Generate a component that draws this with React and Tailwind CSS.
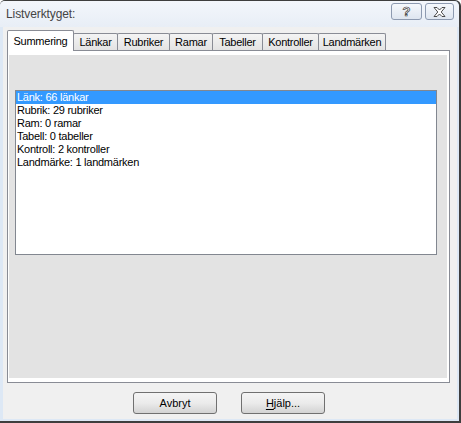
const tabs = [
  { label: "Summering", w: "w-[67px]", active: true },
  { label: "Länkar", w: "w-[45px]" },
  { label: "Rubriker", w: "w-[53px]" },
  { label: "Ramar", w: "w-[44px]" },
  { label: "Tabeller", w: "w-[51px]" },
  { label: "Kontroller", w: "w-[57px]" },
  { label: "Landmärken", w: "w-[68px]" },
];

const rows = [
  "Länk: 66 länkar",
  "Rubrik: 29 rubriker",
  "Ram: 0 ramar",
  "Tabell: 0 tabeller",
  "Kontroll: 2 kontroller",
  "Landmärke: 1 landmärken",
];

const CaptionButton = ({ w, children }) => (
  <div
    className={`${w} h-[17px] flex items-center justify-center rounded-[3px] border border-[#8d9ab0] bg-gradient-to-b from-[#f5f8fc] to-[#dfe6f0]`}
  >
    {children}
  </div>
);

const DialogButton = ({ children }) => (
  <button className="w-[84px] h-[22px] rounded-[3px] border border-[#707070] bg-gradient-to-b from-[#f4f4f4] via-[#ebebeb] to-[#d3d3d3] text-[11px] text-black flex items-center justify-center">
    {children}
  </button>
);

export default function App() {
  return (
    <div
      className="w-[461px] h-[423px] overflow-hidden bg-white"
      style={{ fontFamily: '"Liberation Sans", Arial, sans-serif' }}
    >
      <div className="w-full h-full flex flex-col border-t border-r-2 border-b-2 border-[#3e3e3e] rounded-tl-[5px] rounded-tr-[6px] bg-[#dde8f5]">
        {/* Title bar */}
        <div className="h-[26px] flex items-center pl-[6px] pr-[5px] bg-gradient-to-b from-[#f3f6fb] to-[#e8eef6] rounded-tl-[5px] rounded-tr-[6px]">
          <span className="text-[12px] text-[#444444] tracking-[-0.1px]">Listverktyget:</span>
          <div className="ml-auto flex items-center gap-[3px] -mt-[5px]">
            <CaptionButton w="w-[31px]">
              <span className="text-[13px] font-bold leading-none text-white [-webkit-text-stroke:0.7px_#3a3a3a]">?</span>
            </CaptionButton>
            <CaptionButton w="w-[29px]">
              <svg width="13" height="10" viewBox="0 0 13 10">
                <polygon
                  points="1,0.5 4,0.5 6.5,3 9,0.5 12,0.5 8.2,5 12,9.5 9,9.5 6.5,7 4,9.5 1,9.5 4.8,5"
                  fill="#ffffff"
                  stroke="#3a3a3a"
                  strokeWidth="0.9"
                  strokeLinejoin="round"
                />
              </svg>
            </CaptionButton>
          </div>
        </div>

        {/* Client area */}
        <div className="flex-1 ml-[3px] mr-[2px] mb-[2px] bg-[#f0f0f0] flex flex-col pt-[3px]">
          {/* Tabs */}
          <div className="ml-[4px] h-[20px] flex items-start">
            {tabs.map((t) =>
              t.active ? (
                <div
                  key={t.label}
                  className={`${t.w} h-[21px] relative z-10 bg-white border-t border-l border-r border-[#898c95] rounded-t-[2px] flex items-center justify-center text-[11px] tracking-[-0.25px] text-black`}
                >
                  {t.label}
                </div>
              ) : (
                <div
                  key={t.label}
                  className={`${t.w} h-[17px] mt-[3px] -ml-px bg-gradient-to-b from-[#f4f4f4] to-[#e3e3e3] border-t border-l border-r border-[#898c95] rounded-t-[2px] flex items-center justify-center text-[11px] tracking-[-0.25px] text-black`}
                >
                  {t.label}
                </div>
              )
            )}
          </div>

          {/* Tab panel */}
          <div className="ml-[4px] w-[443px] h-[333px] border border-[#898c95] bg-white pt-[4px] pl-px pr-[2px] pb-[4px]">
            <div className="w-full h-full bg-[#e3e3e3] pt-[35px] pl-[6px]">
              <div className="w-[422px] h-[165px] border border-[#828790] bg-white">
                {rows.map((r, i) => (
                  <div
                    key={r}
                    className={`h-[13px] leading-[13px] pl-px text-[11px] tracking-[-0.25px] whitespace-nowrap ${
                      i === 0 ? "bg-[#3399ff] text-white" : "text-black"
                    }`}
                  >
                    {r}
                  </div>
                ))}
              </div>
            </div>
          </div>

          {/* Buttons */}
          <div className="flex pl-[130px] gap-[24px] mt-[9px]">
            <DialogButton>Avbryt</DialogButton>
            <DialogButton>
              <span className="underline underline-offset-2">H</span>jälp...
            </DialogButton>
          </div>
        </div>
      </div>
    </div>
  );
}
